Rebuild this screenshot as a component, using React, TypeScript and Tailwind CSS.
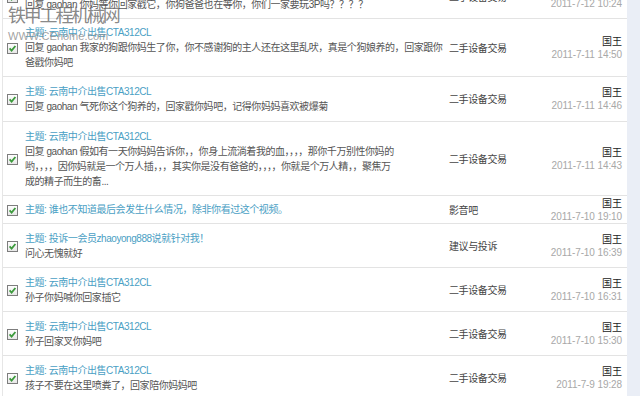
import React from "react";

type Row = {
  h: string;
  mt?: string;
  title: string;
  lines: string[];
  cat: string;
  date: string;
};

const rows: Row[] = [
  {
    h: "h-[44px]",
    mt: "-mt-[25px]",
    title: "主题: 云南中介出售CTA312CL",
    lines: ["回复 gaohan 你妈等你回家戳它，你狗爸爸也在等你，你们一家要玩3P吗？？？？"],
    cat: "二手设备交易",
    date: "2011-7-12 10:24",
  },
  {
    h: "h-[58px]",
    title: "主题: 云南中介出售CTA312CL",
    lines: [
      "回复 gaohan 我家的狗跟你妈生了你，你不感谢狗的主人还在这里乱吠，真是个狗娘养的，回家跟你",
      "爸戳你妈吧",
    ],
    cat: "二手设备交易",
    date: "2011-7-11 14:50",
  },
  {
    h: "h-[45px]",
    title: "主题: 云南中介出售CTA312CL",
    lines: ["回复 gaohan 气死你这个狗养的，回家戳你妈吧，记得你妈妈喜欢被爆菊"],
    cat: "二手设备交易",
    date: "2011-7-11 14:46",
  },
  {
    h: "h-[74px]",
    title: "主题: 云南中介出售CTA312CL",
    lines: [
      "回复 gaohan 假如有一天你妈妈告诉你，，你身上流淌着我的血，，，，那你千万别性你妈的",
      "哟，，，，因你妈就是一个万人插，，，其实你是没有爸爸的，，，，你就是个万人精，，聚焦万",
      "成的精子而生的畜...",
    ],
    cat: "二手设备交易",
    date: "2011-7-11 14:43",
  },
  {
    h: "h-[28px]",
    title: "主题: 谁也不知道最后会发生什么情况，除非你看过这个视频。",
    lines: [],
    cat: "影音吧",
    date: "2011-7-10 19:10",
  },
  {
    h: "h-[44px]",
    title: "主题: 投诉一会员zhaoyong888说就针对我！",
    lines: ["问心无愧就好"],
    cat: "建议与投诉",
    date: "2011-7-10 16:39",
  },
  {
    h: "h-[44px]",
    title: "主题: 云南中介出售CTA312CL",
    lines: ["孙子你妈喊你回家插它"],
    cat: "二手设备交易",
    date: "2011-7-10 16:31",
  },
  {
    h: "h-[44px]",
    title: "主题: 云南中介出售CTA312CL",
    lines: ["孙子回家叉你妈吧"],
    cat: "二手设备交易",
    date: "2011-7-10 15:30",
  },
  {
    h: "h-[44px]",
    title: "主题: 云南中介出售CTA312CL",
    lines: ["孩子不要在这里喷粪了，回家陪你妈妈吧"],
    cat: "二手设备交易",
    date: "2011-7-9 19:28",
  },
];

function Check() {
  return (
    <svg width="11" height="11" viewBox="0 0 11 11">
      <defs>
        <linearGradient id="cbg" x1="0" y1="0" x2="0" y2="1">
          <stop offset="0" stopColor="#ffffff" />
          <stop offset="1" stopColor="#e6e6e6" />
        </linearGradient>
      </defs>
      <rect x="0.5" y="0.5" width="10" height="10" fill="url(#cbg)" stroke="#7d7d7d" />
      <path d="M2.6 5.4 L4.6 7.6 L8.4 3" fill="none" stroke="#3c9a3c" strokeWidth="1.8" />
    </svg>
  );
}

export default function App() {
  return (
    <div
      className="relative flex w-[640px] h-[396px] overflow-hidden bg-white"
      style={{ fontFamily: '"Liberation Sans", "Noto Sans CJK SC", sans-serif' }}
    >
      <div className="w-[625px] ml-[2px] border-l border-[#e6e6e6] bg-white flex flex-col">
        {rows.map((r, i) => (
          <div
            key={i}
            className={`${r.h} ${r.mt ?? ""} shrink-0 flex items-center border-b border-[#e3e3e3] text-[10px] leading-[15px]`}
          >
            <div className="w-[22px] pl-[4px] flex items-center pt-[1px]">
              <Check />
            </div>
            <div className="w-[424px] flex flex-col whitespace-nowrap overflow-hidden tracking-[-0.45px]">
              <div className="text-[#4aa0c4]">{r.title}</div>
              {r.lines.map((l, j) => (
                <div key={j} className="text-[#555555]">
                  {l}
                </div>
              ))}
            </div>
            <div className="w-[100px] text-[#444444] pt-[1px] tracking-[-0.4px]">{r.cat}</div>
            <div className="flex-1 flex flex-col items-end pr-[5px] leading-[13px]">
              <div className="text-[#222222]">国王</div>
              <div className="text-[#a8a8a8] tracking-[-0.1px]">{r.date}</div>
            </div>
          </div>
        ))}
      </div>
      <div className="flex-1 bg-[#eaeef6]" />
      <div className="absolute left-[8px] top-[5px] pointer-events-none">
        <div className="text-[18px] leading-[22px] tracking-[-2.2px] text-[#6a6a6a]/80">铁甲工程机械网</div>
        <div className="text-[11px] leading-[12px] mt-[3px] text-[#8a8a8a]/80">WWW.CEhome.com</div>
      </div>
    </div>
  );
}
